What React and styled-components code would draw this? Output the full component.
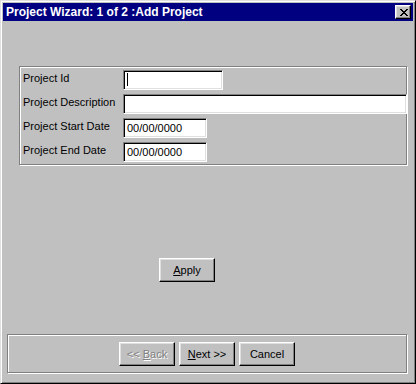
import React from "react";
import styled, { createGlobalStyle } from "styled-components";

const Global = createGlobalStyle`
  html, body { margin: 0; padding: 0; background: #c0c0c0; }
  body { font-family: "Liberation Sans", Arial, sans-serif; font-size: 11px; }
  * { box-sizing: border-box; }
`;

const Window = styled.div`
  width: 416px;
  height: 384px;
  background: #c0c0c0;
  border: 1px solid;
  border-color: #dfdfdf #000 #000 #dfdfdf;
  box-shadow: inset 1px 1px 0 #fff, inset -1px -1px 0 #808080;
  padding: 2px;
  display: flex;
  flex-direction: column;
`;

const TitleBar = styled.div`
  height: 18px;
  background: #000080;
  color: #fff;
  display: flex;
  align-items: center;
  justify-content: space-between;
  padding: 0 2px 0 3px;
`;

const Title = styled.span`
  font-weight: bold;
  font-size: 12px;
  line-height: 18px;
  white-space: nowrap;
`;

const CloseButton = styled.div`
  width: 16px;
  height: 14px;
  background: #c0c0c0;
  border: 1px solid;
  border-color: #fff #000 #000 #fff;
  box-shadow: inset -1px -1px 0 #808080, inset 1px 1px 0 #dfdfdf;
  display: flex;
  align-items: center;
  justify-content: center;
  padding-left: 1px;
`;

const Body = styled.div`
  flex: 1;
  display: flex;
  flex-direction: column;
  align-items: flex-start;
`;

const GroupBox = styled.div`
  border: 1px solid #808080;
  box-shadow: 1px 1px 0 #fff, inset 1px 1px 0 #fff;
  margin-top: ${(p) => p.$top}px;
  margin-left: ${(p) => p.$left}px;
  width: ${(p) => p.$width}px;
  height: ${(p) => p.$height}px;
`;

const FormGrid = styled.div`
  display: grid;
  grid-template-columns: 100px auto;
  row-gap: 4px;
  padding: 3px 0 2px 3px;
  align-items: start;
`;

const Label = styled.div`
  line-height: 16px;
  color: #000;
  white-space: nowrap;
`;

const TextBox = styled.div`
  position: relative;
  width: ${(p) => p.$width}px;
  height: 20px;
  background: #fff;
  border: 1px solid;
  border-color: #808080 #fff #fff #808080;
  box-shadow: inset 1px 1px 0 #000, inset -1px -1px 0 #dfdfdf;
  padding: 0 3px;
  line-height: 18px;
  color: #000;
  white-space: nowrap;
`;

const Caret = styled.span`
  position: absolute;
  left: 3px;
  top: 2px;
  width: 1px;
  height: 13px;
  background: #000;
`;

const Button = styled.div`
  width: 56px;
  height: 24px;
  background: #c0c0c0;
  border: 1px solid;
  border-color: #fff #000 #000 #fff;
  box-shadow: inset -1px -1px 0 #808080, inset 1px 1px 0 #dfdfdf;
  display: flex;
  align-items: center;
  justify-content: center;
  line-height: 14px;
  color: ${(p) => (p.$disabled ? "#808080" : "#000")};
  text-shadow: ${(p) => (p.$disabled ? "1px 1px 0 #fff" : "none")};
  white-space: nowrap;
  margin-top: ${(p) => p.$top || 0}px;
  margin-left: ${(p) => p.$left || 0}px;
  padding-bottom: 1px;
`;

const ButtonRow = styled.div`
  display: flex;
  justify-content: center;
  gap: 4px;
  padding-top: 7px;
`;

const XIcon = () => (
  <svg width="8" height="7" viewBox="0 0 8 7" shapeRendering="crispEdges">
    <path
      fill="#000"
      d="M0 0h2v1H0zM6 0h2v1H6zM1 1h2v1H1zM5 1h2v1H5zM2 2h4v1H2zM3 3h2v1H3zM2 4h4v1H2zM1 5h2v1H1zM5 5h2v1H5zM0 6h2v1H0zM6 6h2v1H6z"
    />
  </svg>
);

export default function App() {
  return (
    <>
      <Global />
      <Window>
        <TitleBar>
          <Title>Project Wizard: 1 of 2 :Add Project</Title>
          <CloseButton>
            <XIcon />
          </CloseButton>
        </TitleBar>
        <Body>
          <GroupBox $top={45} $left={16} $width={388} $height={99}>
            <FormGrid>
              <Label>Project Id</Label>
              <TextBox $width={100}>
                <Caret />
              </TextBox>
              <Label>Project Description</Label>
              <TextBox $width={284} />
              <Label>Project Start Date</Label>
              <TextBox $width={84}>00/00/0000</TextBox>
              <Label>Project End Date</Label>
              <TextBox $width={84}>00/00/0000</TextBox>
            </FormGrid>
          </GroupBox>
          <Button $top={93} $left={156}>
            <span>
              <u>A</u>pply
            </span>
          </Button>
          <GroupBox $top={52} $left={4} $width={400} $height={39}>
            <ButtonRow>
              <Button $disabled>
                <span>
                  &lt;&lt; <u>B</u>ack
                </span>
              </Button>
              <Button>
                <span>
                  <u>N</u>ext &gt;&gt;
                </span>
              </Button>
              <Button>Cancel</Button>
            </ButtonRow>
          </GroupBox>
        </Body>
      </Window>
    </>
  );
}
